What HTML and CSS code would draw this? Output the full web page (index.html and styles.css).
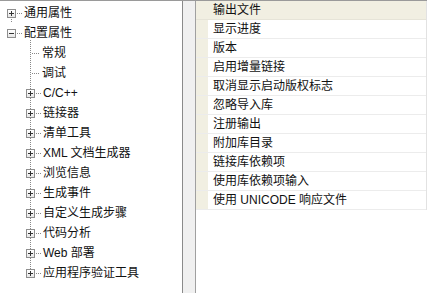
FILE: index.html
```html
<!DOCTYPE html>
<html>
<head>
<meta charset="utf-8">
<link rel="stylesheet" href="styles.css">
</head>
<body>
<div class="frame">
  <div class="tree">
    <div class="row top">
      <span class="box plus"></span><span class="hdots"></span><span class="label">通用属性</span>
    </div>
    <div class="row top open">
      <span class="box minus"></span><span class="hdots"></span><span class="label">配置属性</span>
    </div>
    <div class="children">
      <div class="row leaf"><span class="ldots"></span><span class="label">常规</span></div>
      <div class="row leaf"><span class="ldots"></span><span class="label">调试</span></div>
      <div class="row sub"><span class="box plus"></span><span class="hdots"></span><span class="label">C/C++</span></div>
      <div class="row sub"><span class="box plus"></span><span class="hdots"></span><span class="label">链接器</span></div>
      <div class="row sub"><span class="box plus"></span><span class="hdots"></span><span class="label">清单工具</span></div>
      <div class="row sub"><span class="box plus"></span><span class="hdots"></span><span class="label">XML 文档生成器</span></div>
      <div class="row sub"><span class="box plus"></span><span class="hdots"></span><span class="label">浏览信息</span></div>
      <div class="row sub"><span class="box plus"></span><span class="hdots"></span><span class="label">生成事件</span></div>
      <div class="row sub"><span class="box plus"></span><span class="hdots"></span><span class="label">自定义生成步骤</span></div>
      <div class="row sub"><span class="box plus"></span><span class="hdots"></span><span class="label">代码分析</span></div>
      <div class="row sub"><span class="box plus"></span><span class="hdots"></span><span class="label">Web 部署</span></div>
      <div class="row sub last"><span class="box plus"></span><span class="hdots"></span><span class="label">应用程序验证工具</span></div>
    </div>
  </div>
  <div class="splitter"></div>
  <div class="grid">
    <div class="table">
      <div class="prow selected"><span class="gutter"></span><span class="cell">输出文件</span></div>
      <div class="prow"><span class="gutter"></span><span class="cell">显示进度</span></div>
      <div class="prow"><span class="gutter"></span><span class="cell">版本</span></div>
      <div class="prow"><span class="gutter"></span><span class="cell">启用增量链接</span></div>
      <div class="prow"><span class="gutter"></span><span class="cell">取消显示启动版权标志</span></div>
      <div class="prow"><span class="gutter"></span><span class="cell">忽略导入库</span></div>
      <div class="prow"><span class="gutter"></span><span class="cell">注册输出</span></div>
      <div class="prow"><span class="gutter"></span><span class="cell">附加库目录</span></div>
      <div class="prow"><span class="gutter"></span><span class="cell">链接库依赖项</span></div>
      <div class="prow"><span class="gutter"></span><span class="cell">使用库依赖项输入</span></div>
      <div class="prow"><span class="gutter"></span><span class="cell">使用 UNICODE 响应文件</span></div>
    </div>
  </div>
</div>
</body>
</html>
```
FILE: styles.css
```css
html, body {
  margin: 0;
  padding: 0;
  background: #ffffff;
}
body {
  width: 427px;
  height: 293px;
  overflow: hidden;
  font-family: "Liberation Sans", "Noto Sans CJK SC", sans-serif;
  font-size: 12px;
  color: #111;
}
.frame {
  display: flex;
  height: 292px;
  border-top: 1px solid #9a9a9a;
}
.tree {
  width: 182px;
  border-right: 1px solid #8a8a8a;
  padding-top: 2px;
  background: #fff;
}
.row {
  display: flex;
  align-items: center;
  height: 20px;
  white-space: nowrap;
}
.row.top {
  padding-left: 7px;
}
.row.top:first-child {
  background-image: repeating-linear-gradient(to bottom, #888 0 1px, transparent 1px 2px);
  background-size: 1px 6px;
  background-repeat: no-repeat;
  background-position: 11px 16px;
}
.box {
  box-sizing: border-box;
  width: 9px;
  height: 9px;
  border: 1px solid #8e8e8e;
  background: linear-gradient(#ffffff, #e6e6e6);
  position: relative;
  flex: none;
}
.box::before {
  content: "";
  position: absolute;
  left: 1px;
  top: 3px;
  width: 5px;
  height: 1px;
  background: #333;
}
.box.plus::after {
  content: "";
  position: absolute;
  left: 3px;
  top: 1px;
  width: 1px;
  height: 5px;
  background: #333;
}
.hdots {
  width: 5px;
  height: 1px;
  margin-left: 1px;
  background: repeating-linear-gradient(to right, #888 0 1px, transparent 1px 2px);
  flex: none;
}
.label {
  margin-left: 2px;
  line-height: 20px;
}
.children {
  margin-top: -3px;
  padding-top: 3px;
  background-image: repeating-linear-gradient(to bottom, #888 0 1px, transparent 1px 2px);
  background-size: 1px 233px;
  background-position: 30px 0;
  background-repeat: no-repeat;
}
.row.sub {
  padding-left: 26px;
}
.row.leaf {
  padding-left: 32px;
}
.ldots {
  width: 8px;
  height: 1px;
  background: repeating-linear-gradient(to right, #888 0 1px, transparent 1px 2px);
  flex: none;
}
.splitter {
  width: 12px;
  background: #f0f0f0;
  border-right: 1px solid #a0a0a0;
}
.grid {
  flex: 1;
  background: #fff;
}
.table {
  width: 230px;
  border-right: 1px solid #e2e2e2;
}
.prow {
  display: flex;
  height: 19px;
  border-bottom: 1px solid #ececec;
  box-sizing: border-box;
}
.gutter {
  width: 12px;
  background: #f1efe2;
  flex: none;
}
.cell {
  flex: 1;
  padding-left: 5px;
  line-height: 18px;
  white-space: nowrap;
  overflow: hidden;
}
.prow.selected .cell {
  background: #f1efe2;
}
.prow.selected {
  border-bottom-color: #e6e4d8;
}
```
